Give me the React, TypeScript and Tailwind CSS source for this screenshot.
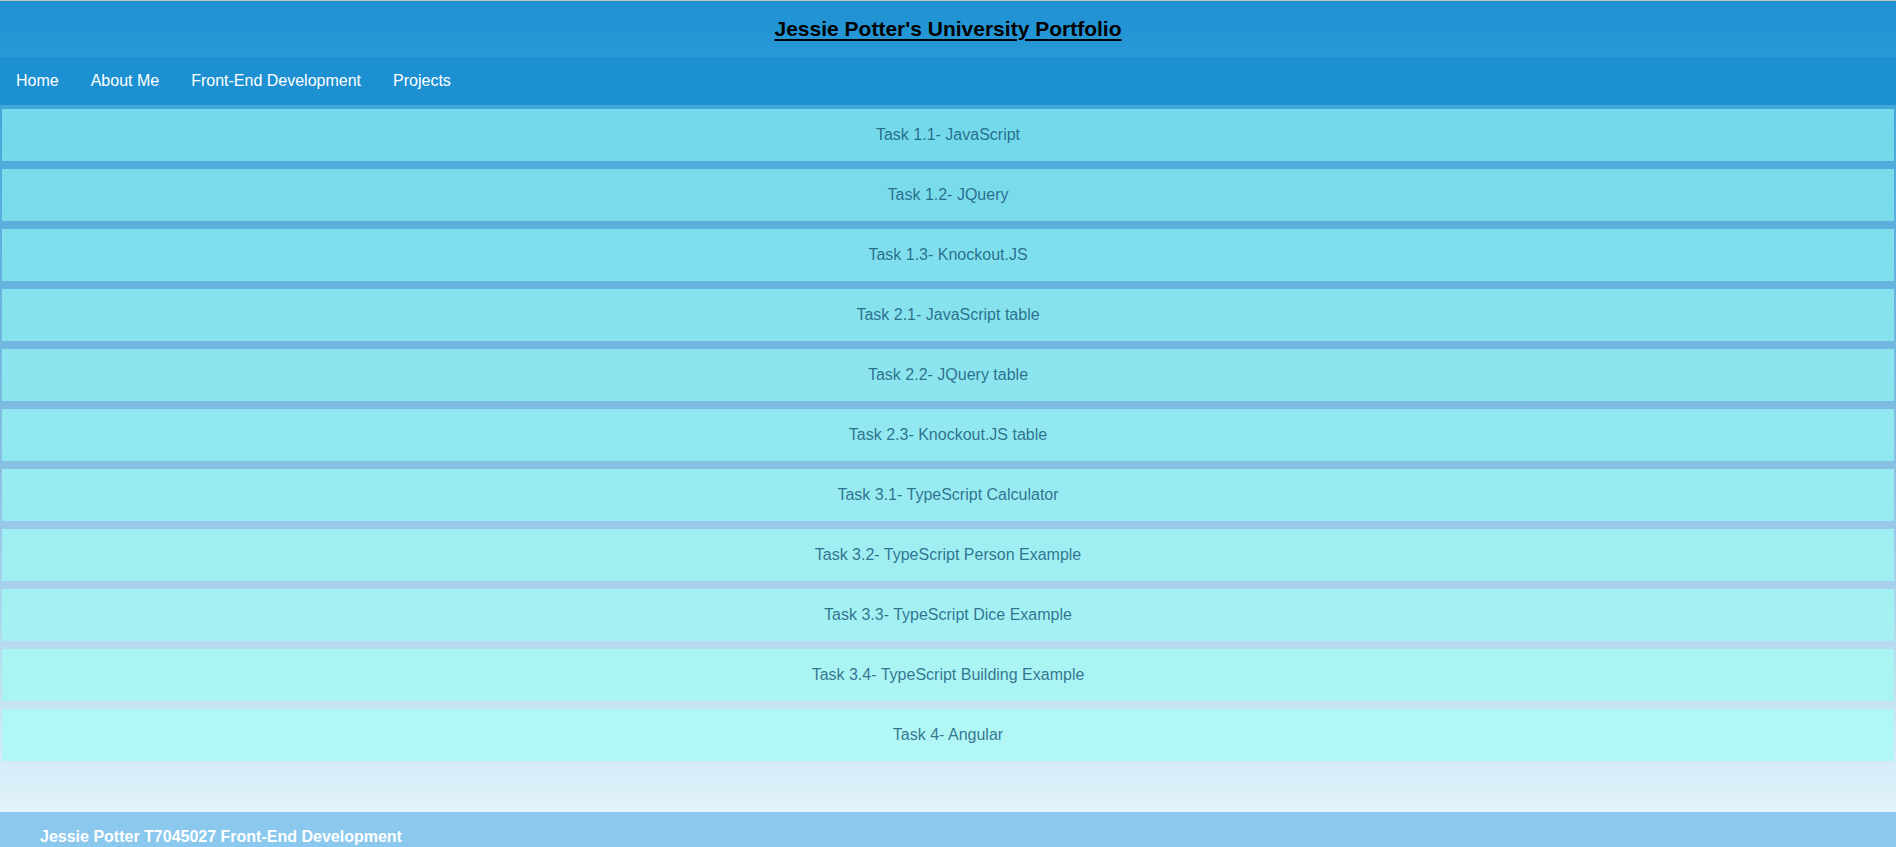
const tasks = [
  { title: "Task 1.1- JavaScript", bg: "bg-[#74d9ea]" },
  { title: "Task 1.2- JQuery", bg: "bg-[#7adceb]" },
  { title: "Task 1.3- Knockout.JS", bg: "bg-[#80dfec]" },
  { title: "Task 2.1- JavaScript table", bg: "bg-[#86e2ed]" },
  { title: "Task 2.2- JQuery table", bg: "bg-[#8ce5ee]" },
  { title: "Task 2.3- Knockout.JS table", bg: "bg-[#92e8f0]" },
  { title: "Task 3.1- TypeScript Calculator", bg: "bg-[#98ebf1]" },
  { title: "Task 3.2- TypeScript Person Example", bg: "bg-[#9eeef2]" },
  { title: "Task 3.3- TypeScript Dice Example", bg: "bg-[#a4f1f3]" },
  { title: "Task 3.4- TypeScript Building Example", bg: "bg-[#aaf4f4]" },
  { title: "Task 4- Angular", bg: "bg-[#b0f7f5]" },
];

const links = ["Home", "About Me", "Front-End Development", "Projects"];

export default function App() {
  return (
    <div className="min-h-screen font-['Liberation_Sans',Arial,sans-serif] border-t border-[#c4c4c4]">
      {/* header */}
      <header className="h-[56px] flex items-center justify-center bg-gradient-to-b from-[#1f92d3] to-[#2898d6]">
        <h1 className="text-[21px] font-bold text-black underline underline-offset-[3px] decoration-[2px]">
          Jessie Potter's University Portfolio
        </h1>
      </header>

      <nav className="h-[48px] flex items-center bg-[#1d90d2]">
        {links.map((l) => (
          <a key={l} href="#" className="px-4 text-[16px] text-white">
            {l}
          </a>
        ))}
      </nav>

      {/* task list */}
      <main className="pt-[4px] pb-[51px] bg-gradient-to-b from-[#43a6d9] via-[#86bfe3] to-[#e2f3fb] flex flex-col gap-2">
        {tasks.map((t) => (
          <a
            key={t.title}
            href="#"
            className={`mx-[2px] h-[52px] flex items-center justify-center text-[16px] text-[#0a4a6e]/75 ${t.bg}`}
          >
            {t.title}
          </a>
        ))}
      </main>

      <footer className="h-[35px] overflow-hidden bg-[#8ac8ee] pl-10 pt-4">
        <p className="text-[16px] leading-[18px] font-bold text-white">
          Jessie Potter T7045027 Front-End Development
        </p>
      </footer>
    </div>
  );
}
